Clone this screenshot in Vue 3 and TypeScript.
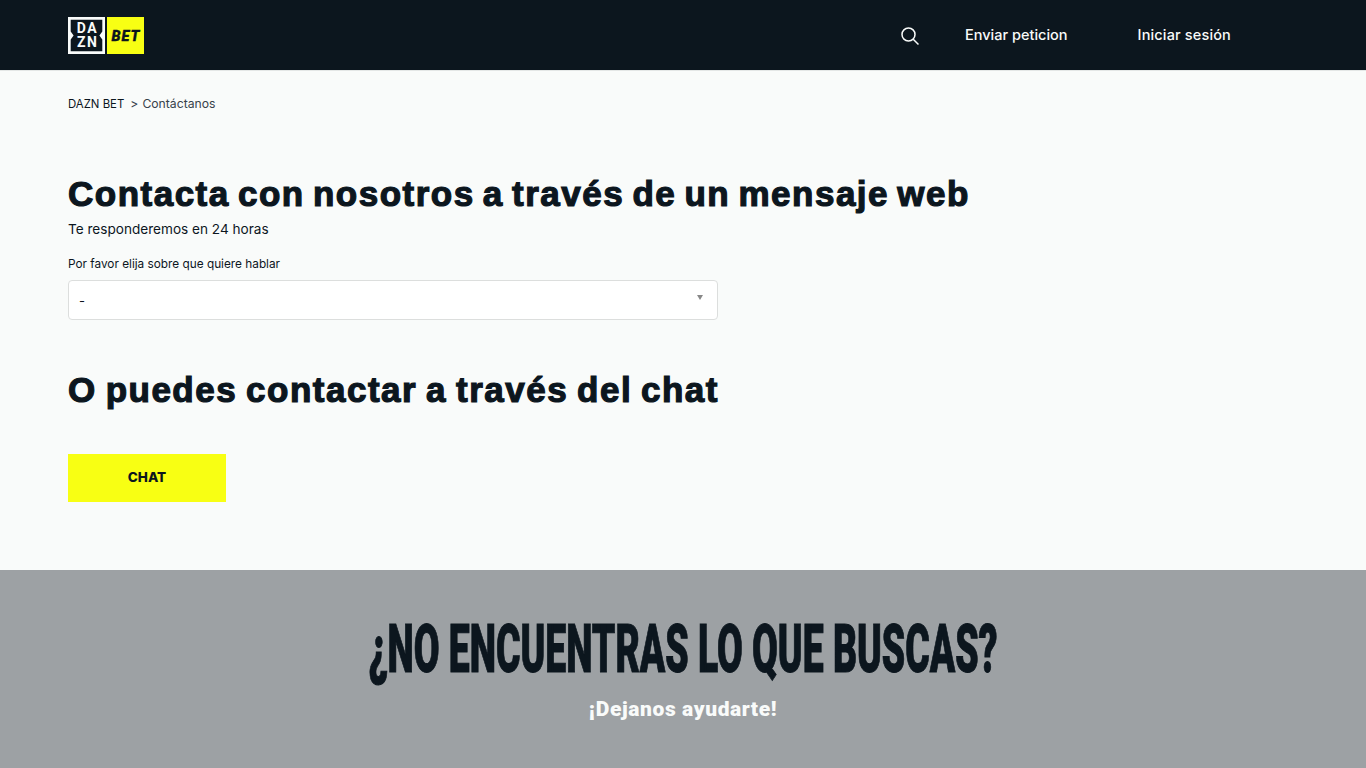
<script setup lang="ts">
const title = 'Contacta con nosotros a través de un mensaje web'
</script>

<template>
  <div class="page">
    <header class="top">
      <svg class="logo" width="76" height="37" viewBox="0 0 76 37">
        <rect width="37" height="37" fill="#f9fbfa" />
        <path d="M2.7 2.7H34.3V14.6L31.4 18.5L34.3 22.4V34.3H2.7V22.4L5.6 18.5L2.7 14.6Z" fill="#0c161e" />
        <text x="13.2" y="16" class="logo-t" text-anchor="middle">D</text>
        <text x="24" y="16" class="logo-t" text-anchor="middle">A</text>
        <text x="13.2" y="30" class="logo-t" text-anchor="middle">Z</text>
        <text x="24" y="30" class="logo-t" text-anchor="middle">N</text>
        <rect x="39" width="37" height="37" fill="#f8ff13" />
        <text x="58" y="24" class="logo-b" text-anchor="middle">BET</text>
      </svg>
      <nav class="nav">
        <svg class="search" width="20" height="20" viewBox="0 0 20 20" fill="none" stroke="#f9fbfa" stroke-width="1.5">
          <circle cx="8.5" cy="8.5" r="6.5" />
          <path d="M13.2 13.2L18.5 18.5" />
        </svg>
        <a class="link first">Enviar peticion</a>
        <a class="link second">Iniciar sesión</a>
      </nav>
    </header>

    <main class="main">
      <p class="crumbs"><span class="c1">DAZN BET</span><span class="sep">&gt;</span><span class="c2">Contáctanos</span></p>
      <h1 class="h h1">{{ title }}</h1>
      <p class="sub">Te responderemos en 24 horas</p>
      <label class="lab">Por favor elija sobre que quiere hablar</label>
      <div class="select">
        <span>-</span>
        <i class="arrow"></i>
      </div>
      <h2 class="h h2">O puedes contactar a través del chat</h2>
      <button class="chat">CHAT</button>
    </main>

    <section class="foot">
      <h3 class="big">¿NO ENCUENTRAS LO QUE BUSCAS?</h3>
      <p class="help">¡Dejanos ayudarte!</p>
    </section>
  </div>
</template>

<style>
html, body { margin: 0; background: #f9fbfa; }
</style>

<style scoped>
.page { height: 768px; overflow: hidden; display: flex; flex-direction: column; font-family: Inter, "Liberation Sans", sans-serif; color: #0c161e; }
.top { height: 71px; box-sizing: border-box; background: #0c161e; padding: 17px 0 0 68px; display: flex; justify-content: space-between; align-items: flex-start; border-bottom: 1px solid #e4e7e6; }
.logo { display: block; }
.logo-t { font: 700 14px Roboto, sans-serif; fill: #f9fbfa; }
.logo-b { font: italic 900 14.5px Roboto, sans-serif; fill: #0c161e; letter-spacing: 1px; stroke: #0c161e; stroke-width: .3px; }
.nav { display: flex; align-items: center; height: 34px; padding-right: 135px; }
.search { margin-right: 45px; margin-top: 3px; }
.link { color: #f9fbfa; font-size: 14.5px; font-weight: 500; white-space: nowrap; }
.first { margin-right: 70px; }
.second { letter-spacing: .15px; }
.main { height: 499px; box-sizing: border-box; padding: 25px 0 0 68px; display: flex; flex-direction: column; align-items: flex-start; }
.crumbs { margin: 0; height: 16px; font-size: 12.2px; line-height: 16px; }
.c1 { font-size: 11.4px; }
.sep { margin: 0 4px 0 6px; color: #37424b; }
.c2 { color: #37424b; }
.h { margin: 0; font-family: "Liberation Sans", Arial, sans-serif; font-weight: 700; font-size: 35px; line-height: 40px; white-space: nowrap; letter-spacing: 1.5px; -webkit-text-stroke: 1.2px #0c161e; }
.h1 { margin-top: 62px; word-spacing: -3px; }
.sub { margin: 6px 0 0; font-size: 13.6px; line-height: 18px; }
.lab { margin-top: 18px; font-size: 11.8px; line-height: 16px; }
.select { margin-top: 8px; width: 650px; height: 40px; box-sizing: border-box; background: #fff; border: 1px solid #dcdedd; border-radius: 4px; display: flex; justify-content: space-between; padding: 12px 14px 0 10px; font-size: 13px; line-height: 16px; }
.arrow { width: 0; height: 0; margin-top: 2px; border-left: 3px solid transparent; border-right: 3px solid transparent; border-top: 5px solid #888; }
.h2 { margin-top: 50px; word-spacing: -2.3px; }
.chat { margin-top: 44px; width: 158px; height: 48px; border: 0; padding: 0 0 2px; background: #f8ff13; color: #0c161e; font-family: Inter, sans-serif; font-weight: 800; font-size: 13.5px; }
.foot { flex: 1; background: #9da1a4; text-align: center; }
.big { margin: 44px 0 0; height: 72px; font-family: Roboto, sans-serif; font-weight: 900; font-size: 66px; line-height: 72px; white-space: nowrap; transform: scaleX(.566); color: #0c161e; -webkit-text-stroke: 1px #0c161e; }
.help { margin: 11px 0 0; color: #f9fbfa; font-family: Roboto, sans-serif; font-size: 21px; font-weight: 900; line-height: 24px; letter-spacing: .6px; }
</style>
